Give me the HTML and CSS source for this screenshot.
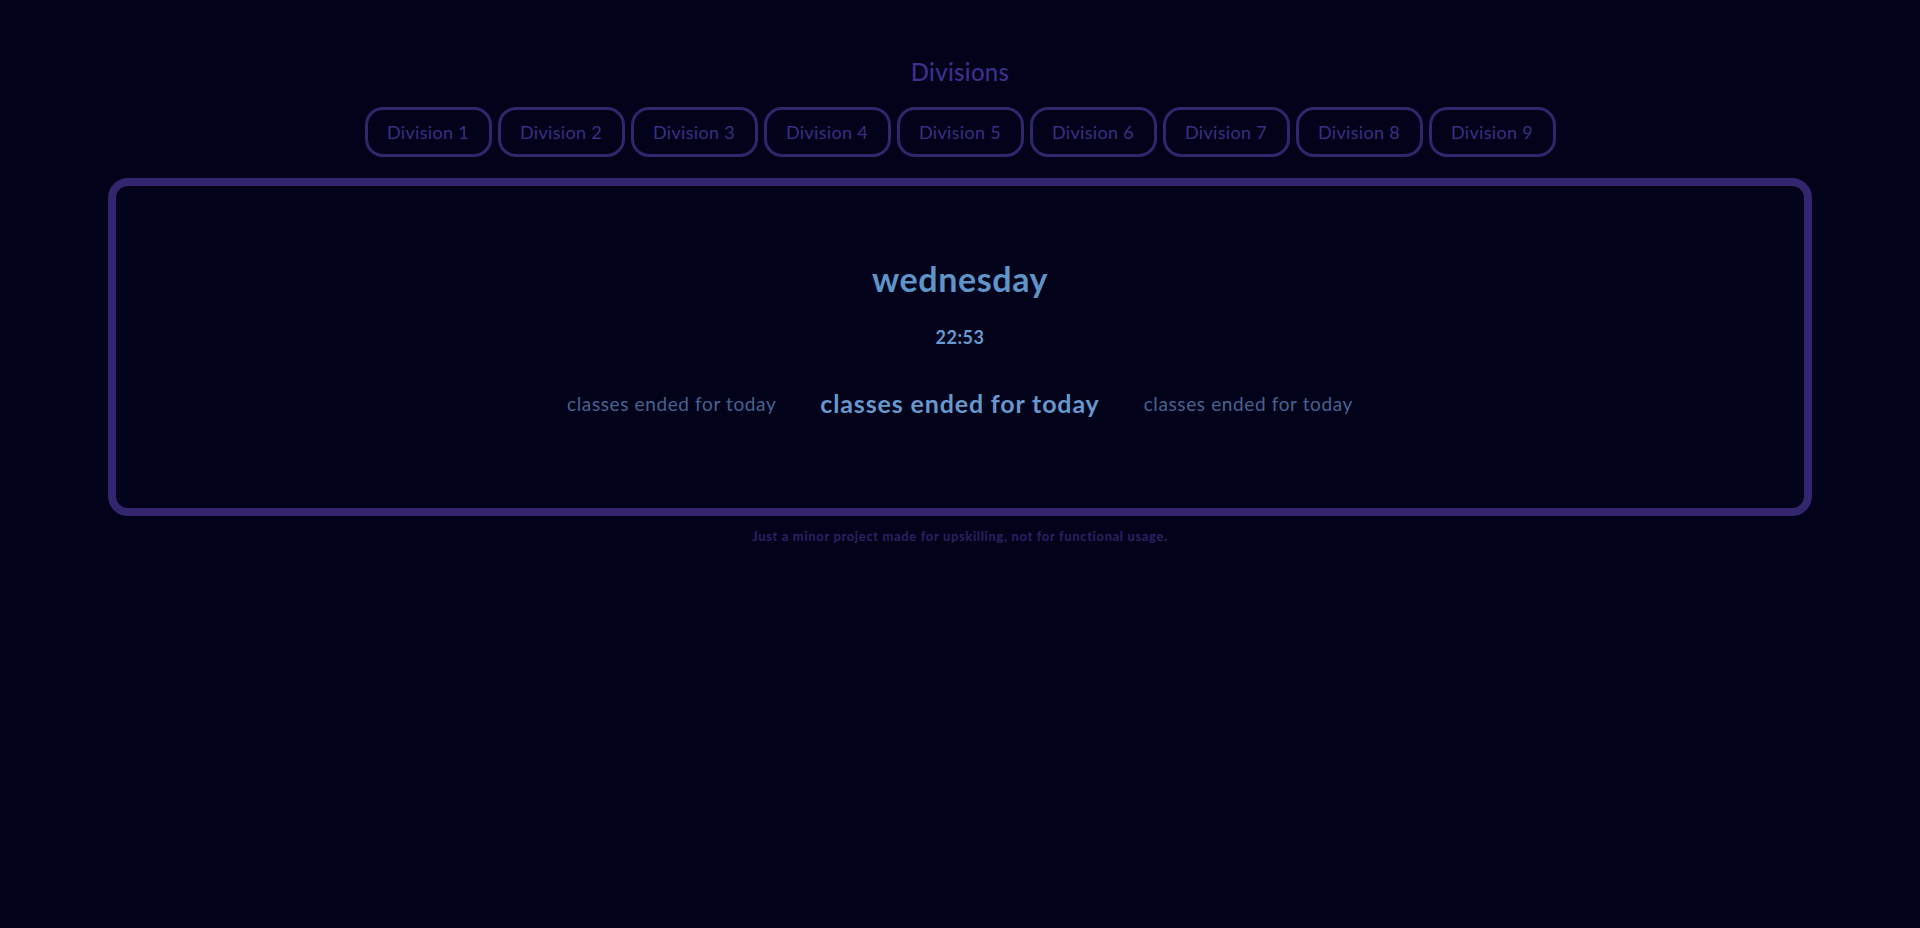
FILE: index.html
```html
<!DOCTYPE html>
<html lang="en">
<head>
<meta charset="utf-8">
<title>Divisions</title>
<link rel="stylesheet" href="styles.css">
</head>
<body>
  <h2 class="title">Divisions</h2>
  <nav class="tabs">
    <button class="tab">Division 1</button>
    <button class="tab">Division 2</button>
    <button class="tab">Division 3</button>
    <button class="tab">Division 4</button>
    <button class="tab">Division 5</button>
    <button class="tab">Division 6</button>
    <button class="tab">Division 7</button>
    <button class="tab">Division 8</button>
    <button class="tab">Division 9</button>
  </nav>
  <main class="card">
    <h1 class="day">wednesday</h1>
    <div class="time">22:53</div>
    <div class="classes">
      <span class="cls side">classes ended for today</span>
      <span class="cls current">classes ended for today</span>
      <span class="cls side">classes ended for today</span>
    </div>
  </main>
  <p class="footer">Just a minor project made for upskilling, not for functional usage.</p>
</body>
</html>
```
FILE: styles.css
```css
html, body {
  background: #03021b;
}
body {
  margin: 8px;
  font-family: Lato, "Open Sans", sans-serif;
  text-align: center;
}
.title {
  margin: 49px 0 0;
  font-size: 24px;
  line-height: 30px;
  font-weight: 500;
  color: #3b308c;
  letter-spacing: 0.3px;
}
.tabs {
  margin-top: 20px;
  display: flex;
  justify-content: center;
  gap: 6px;
}
.tab {
  box-sizing: border-box;
  width: 127px;
  height: 50px;
  padding: 0;
  background: transparent;
  border: 3px solid #30266c;
  border-radius: 18px;
  font-family: inherit;
  font-size: 18px;
  color: #3a2f82;
  letter-spacing: 0.3px;
}
.card {
  display: block;
  margin: 21px 100px 0;
  height: 338px;
  box-sizing: border-box;
  border: 8px solid #33266e;
  border-radius: 20px;
  padding-top: 73px;
}
.day {
  margin: 0;
  font-size: 34px;
  line-height: 40px;
  font-weight: 700;
  color: #5f94c8;
  letter-spacing: 0.6px;
}
.time {
  margin-top: 26px;
  font-size: 18px;
  line-height: 24px;
  font-weight: 700;
  color: #6699cf;
  letter-spacing: 0.5px;
}
.classes {
  margin-top: 38px;
  display: flex;
  justify-content: center;
  align-items: center;
  gap: 44px;
  height: 32px;
}
.cls {
  white-space: nowrap;
}
.current {
  font-size: 25px;
  font-weight: 700;
  color: #6798cd;
  letter-spacing: 0.85px;
}
.side {
  font-size: 19px;
  color: #46628e;
  letter-spacing: 0.62px;
}
.footer {
  margin: 12px 0 0;
  font-size: 13px;
  line-height: 16px;
  font-weight: 700;
  color: #2a2264;
  letter-spacing: 0.64px;
}
```
